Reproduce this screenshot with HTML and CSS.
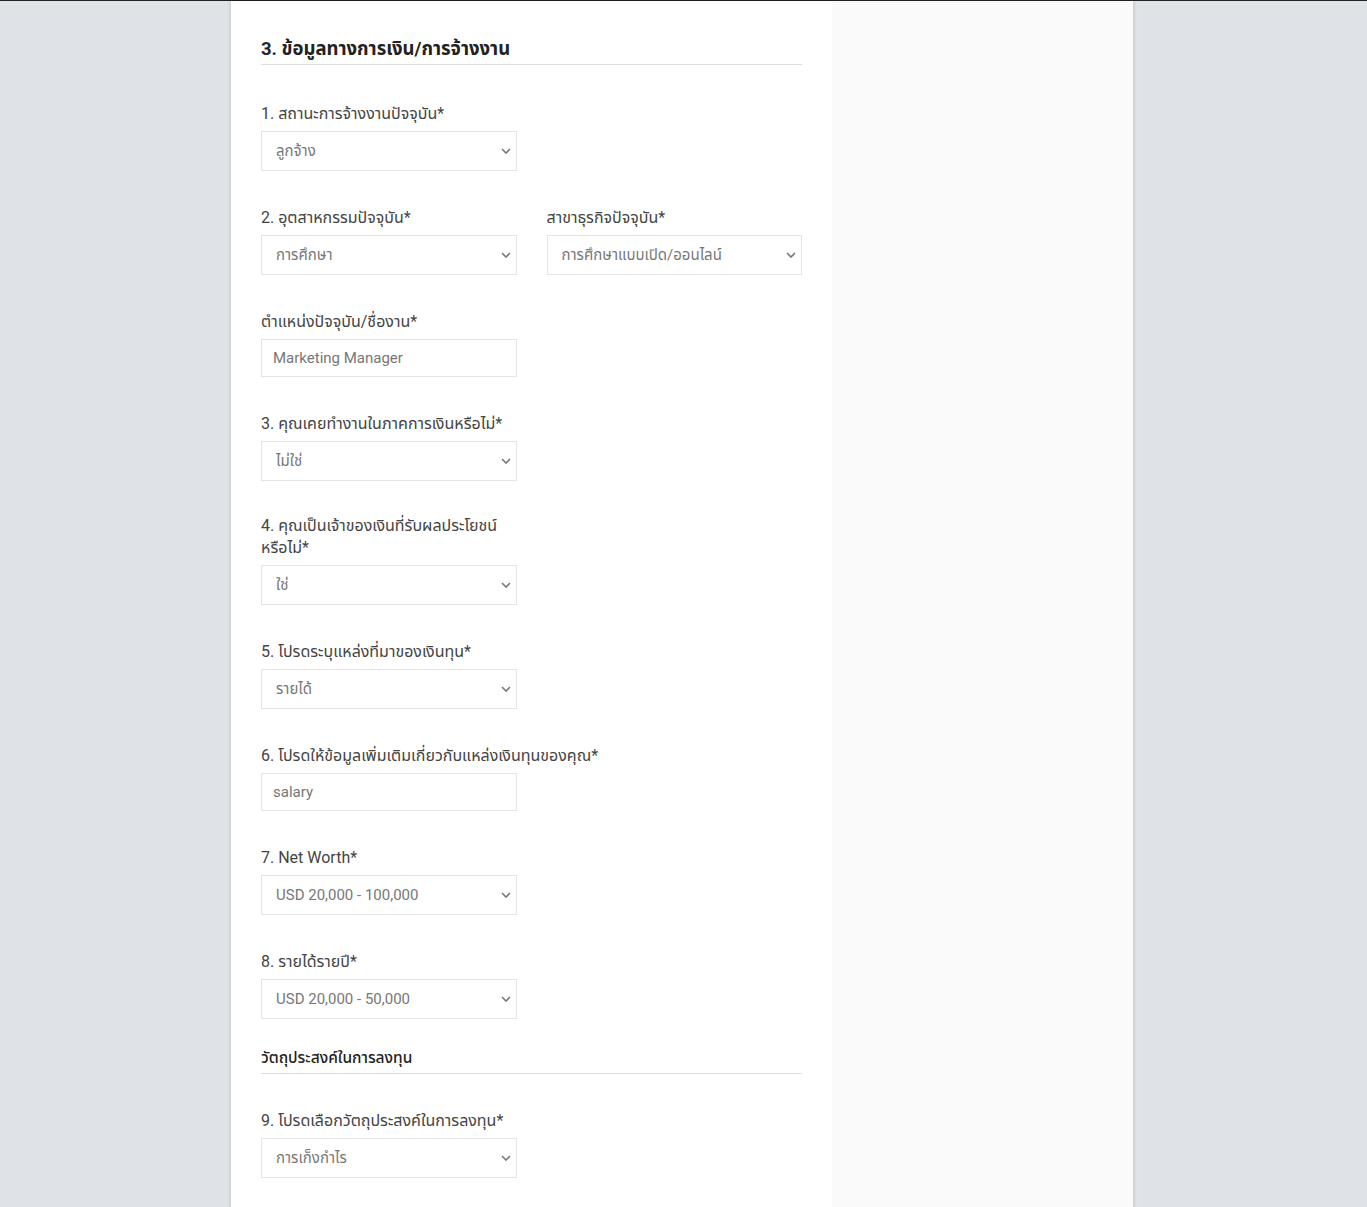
FILE: index.html
```html
<!DOCTYPE html>
<html lang="th">
<head>
<meta charset="utf-8">
<title>ข้อมูลทางการเงิน</title>
<link rel="stylesheet" href="styles.css">
</head>
<body>
<div class="topbar"></div>
<div class="page">
  <main class="form-col">
    <h2 class="section-title">3. ข้อมูลทางการเงิน/การจ้างงาน</h2>

    <div class="field">
      <label class="label">1. สถานะการจ้างงานปัจจุบัน*</label>
      <select class="control"><option>ลูกจ้าง</option></select>
    </div>

    <div class="row">
      <div class="field">
        <label class="label">2. อุตสาหกรรมปัจจุบัน*</label>
        <select class="control"><option>การศึกษา</option></select>
      </div>
      <div class="field">
        <label class="label">สาขาธุรกิจปัจจุบัน*</label>
        <select class="control"><option>การศึกษาแบบเปิด/ออนไลน์</option></select>
      </div>
    </div>

    <div class="field">
      <label class="label">ตำแหน่งปัจจุบัน/ชื่องาน*</label>
      <input class="control input" type="text" value="Marketing Manager">
    </div>

    <div class="field field-tight">
      <label class="label">3. คุณเคยทำงานในภาคการเงินหรือไม่*</label>
      <select class="control"><option>ไม่ใช่</option></select>
    </div>

    <div class="field">
      <label class="label">4. คุณเป็นเจ้าของเงินที่รับผลประโยชน์<br>หรือไม่*</label>
      <select class="control"><option>ใช่</option></select>
    </div>

    <div class="field">
      <label class="label">5. โปรดระบุแหล่งที่มาของเงินทุน*</label>
      <select class="control"><option>รายได้</option></select>
    </div>

    <div class="field">
      <label class="label">6. โปรดให้ข้อมูลเพิ่มเติมเกี่ยวกับแหล่งเงินทุนของคุณ*</label>
      <input class="control input" type="text" value="salary">
    </div>

    <div class="field">
      <label class="label">7. Net Worth*</label>
      <select class="control"><option>USD 20,000 - 100,000</option></select>
    </div>

    <div class="field field-last">
      <label class="label">8. รายได้รายปี*</label>
      <select class="control"><option>USD 20,000 - 50,000</option></select>
    </div>

    <h3 class="sub-title">วัตถุประสงค์ในการลงทุน</h3>

    <div class="field">
      <label class="label">9. โปรดเลือกวัตถุประสงค์ในการลงทุน*</label>
      <select class="control"><option>การเก็งกำไร</option></select>
    </div>
  </main>
  <aside class="side-col"></aside>
</div>
</body>
</html>
```

FILE: styles.css
```css
html, body {
  margin: 0;
  padding: 0;
}
body {
  background: #dfe3e7;
  font-family: Roboto, "Noto Sans", "Noto Sans Thai", Tahoma, sans-serif;
  color: #444;
  min-height: 1207px;
}
.topbar {
  height: 1px;
  background: #222;
}
.page {
  width: 902px;
  margin-left: calc(50% - 452.5px);
  display: flex;
  min-height: 1206px;
  box-shadow: 0 0 4px rgba(0, 0, 0, 0.18);
}
.form-col {
  width: 541px;
  background: #fff;
  padding: 36px 30px 0 30px;
}
.side-col {
  flex: 1;
  background: #fafafa;
}
.section-title {
  margin: 0 0 38px 0;
  font-size: 18.5px;
  font-weight: 700;
  color: #222;
  line-height: 24px;
  padding-bottom: 3px;
  border-bottom: 1px solid #ddd;
}
.sub-title {
  margin: -8px 0 36px 0;
  font-size: 15.5px;
  font-weight: 500;
  color: #222;
  line-height: 22px;
  padding-bottom: 4px;
  border-bottom: 1px solid #ddd;
}
.row {
  display: flex;
  gap: 30px;
}
.row .field {
  width: 256px;
}
.field {
  display: flex;
  flex-direction: column;
  margin-bottom: 36px;
}
.field-tight {
  margin-bottom: 34px;
}
.label {
  font-size: 16px;
  line-height: 22px;
  color: #444;
  margin-bottom: 6px;
}
.control {
  width: 256px;
  height: 40px;
  box-sizing: border-box;
  border: 1px solid #e4e4e4;
  border-radius: 0;
  background-color: #fff;
  color: #777;
  font-family: Roboto, "Noto Sans", "Noto Sans Thai", Tahoma, sans-serif;
  font-size: 15px;
  padding: 0 30px 0 14px;
  appearance: none;
  -webkit-appearance: none;
  outline: none;
  background-image: url("data:image/svg+xml;utf8,<svg xmlns='http://www.w3.org/2000/svg' width='10' height='6' viewBox='0 0 10 6'><path d='M1 1l4 4 4-4' fill='none' stroke='%23777' stroke-width='1.6'/></svg>");
  background-repeat: no-repeat;
  background-position: right 5px center;
}
.row .field .control {
  width: 100%;
}
.input {
  height: 38px;
  padding-left: 11px;
  background-image: none;
}
```
